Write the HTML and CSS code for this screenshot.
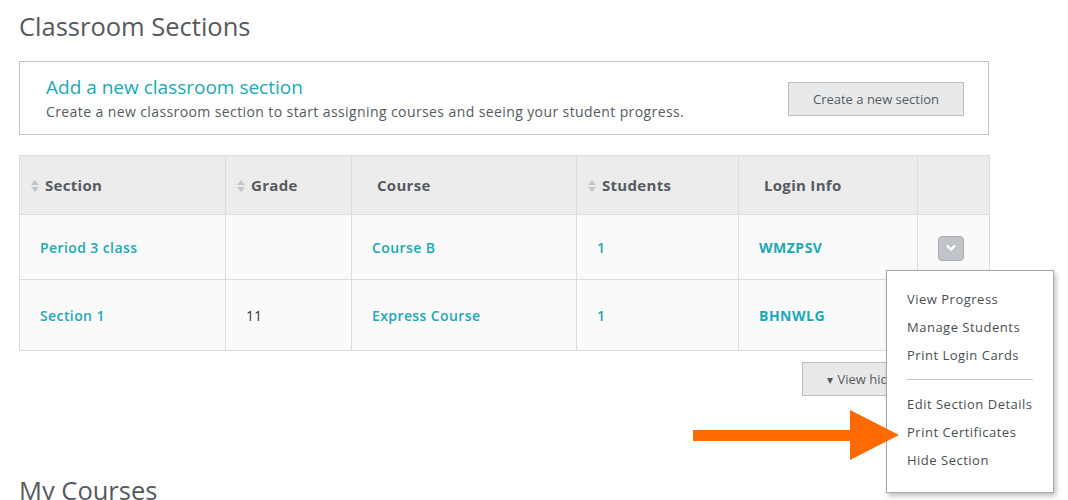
FILE: index.html
```html
<!DOCTYPE html>
<html>
<head>
  <title>Classroom Sections</title>
  <link rel="stylesheet" href="styles.css">
</head>
<body>
  <div class="page">
    <h1>Classroom Sections</h1>

    <div class="add-box">
      <div class="add-text">
        <h2>Add a new classroom section</h2>
        <p>Create a new classroom section to start assigning courses and seeing your student progress.</p>
      </div>
      <button class="btn create-btn">Create a new section</button>
    </div>

    <table class="sections">
      <thead>
        <tr>
          <th class="col-section sortable"><svg class="sort" width="8" height="12" viewBox="0 0 8 12"><path d="M4 0 L8 5 L0 5 Z M4 12 L8 7 L0 7 Z" fill="#c2c4c6"/></svg>Section</th>
          <th class="col-grade sortable"><svg class="sort" width="8" height="12" viewBox="0 0 8 12"><path d="M4 0 L8 5 L0 5 Z M4 12 L8 7 L0 7 Z" fill="#c2c4c6"/></svg>Grade</th>
          <th class="col-course">Course</th>
          <th class="col-students sortable"><svg class="sort" width="8" height="12" viewBox="0 0 8 12"><path d="M4 0 L8 5 L0 5 Z M4 12 L8 7 L0 7 Z" fill="#c2c4c6"/></svg>Students</th>
          <th class="col-login">Login Info</th>
          <th class="col-menu"></th>
        </tr>
      </thead>
      <tbody>
        <tr class="row-1">
          <td><a href="#">Period 3 class</a></td>
          <td></td>
          <td><a href="#">Course B</a></td>
          <td><a href="#">1</a></td>
          <td><a href="#" class="code">WMZPSV</a></td>
          <td class="menu-cell">
            <span class="menu-toggle"><svg width="12" height="8" viewBox="0 0 12 8"><path d="M2 1.5 L6 5.5 L10 1.5" fill="none" stroke="#fff" stroke-width="2.4"/></svg></span>
          </td>
        </tr>
        <tr class="row-2">
          <td><a href="#">Section 1</a></td>
          <td class="plain">11</td>
          <td><a href="#">Express Course</a></td>
          <td><a href="#">1</a></td>
          <td><a href="#" class="code">BHNWLG</a></td>
          <td class="menu-cell"></td>
        </tr>
      </tbody>
    </table>

    <div class="table-actions">
      <button class="btn hidden-btn"><span class="caret">&#9662;</span> View hidden sections</button>
    </div>

    <h1 class="next-heading">My Courses</h1>

    <ul class="dropdown">
      <li>View Progress</li>
      <li>Manage Students</li>
      <li>Print Login Cards</li>
      <li class="divider"></li>
      <li>Edit Section Details</li>
      <li>Print Certificates</li>
      <li>Hide Section</li>
    </ul>

    <div class="pointer">
      <span class="pointer-shaft"></span>
      <span class="pointer-head"></span>
    </div>
  </div>
</body>
</html>
```

FILE: styles.css
```css
body {
  margin: 0;
  font-family: "Open Sans", Arial, sans-serif;
  color: #555b61;
  background: #fff;
  overflow: hidden;
}
.page {
  position: relative;
  width: 970px;
  padding: 8px 19px 0;
}
h1 {
  margin: 0;
  font-size: 25.5px;
  font-weight: 400;
  line-height: 36px;
  color: #555a60;
}
.add-box {
  display: flex;
  align-items: center;
  justify-content: space-between;
  height: 72px;
  margin-top: 17px;
  padding: 0 24px 0 26px;
  border: 1px solid #c4c4c4;
}
.add-box h2 {
  margin: 0;
  font-size: 19px;
  font-weight: 400;
  line-height: 24px;
  color: #1ba9b6;
}
.add-box p {
  margin: 3px 0 0;
  font-size: 14px;
  line-height: 20px;
  letter-spacing: 0.4px;
  color: #555b61;
}
.btn {
  font-family: "Open Sans", Arial, sans-serif;
  font-size: 13px;
  color: #555b61;
  background: #e8e9eb;
  border: 1px solid #bdbdbd;
  border-radius: 0;
}
.create-btn {
  width: 176px;
  height: 34px;
  margin-top: 1px;
}
.sections {
  width: 970px;
  margin-top: 20px;
  border-collapse: collapse;
  table-layout: fixed;
  border: 1px solid #d6d6d6;
}
.sections th,
.sections td {
  box-sizing: border-box;
  border: 1px solid #dcdcdc;
  text-align: left;
}
.sections th {
  height: 59px;
  padding: 0 0 0 25px;
  background: #ececec;
  font-size: 15px;
  font-weight: 700;
  letter-spacing: 0.3px;
  color: #555b61;
}
.sections th.sortable {
  padding-left: 11px;
}
.sort {
  vertical-align: -1px;
  margin-right: 6px;
}
.col-section { width: 206px; }
.col-grade { width: 126px; }
.col-course { width: 225px; }
.col-students { width: 162px; }
.col-login { width: 179px; }
.col-menu { width: 72px; }
.sections td {
  padding: 0 0 0 20px;
  background: #fafafa;
  font-size: 14px;
}
.row-1 td { height: 65px; }
.row-2 td { height: 71px; }
.sections a {
  color: #1ba9b6;
  font-weight: 600;
  letter-spacing: 0.4px;
  text-decoration: none;
}
.sections a.code {
  font-weight: 700;
  letter-spacing: 0.5px;
}
.sections td.plain {
  color: #333;
}
.menu-toggle {
  display: inline-flex;
  align-items: center;
  justify-content: center;
  width: 24px;
  height: 23px;
  margin-top: 2px;
  background: #c0c4c8;
  border: 1px solid #a9adb1;
  border-radius: 4px;
}
.table-actions {
  display: flex;
  justify-content: flex-end;
  margin-top: 11px;
}
.hidden-btn {
  width: 187px;
  height: 34px;
  padding: 0 0 0 24px;
  text-align: left;
}
.caret {
  font-size: 12px;
  margin-right: 1px;
}
.next-heading {
  margin-top: 76px;
}
.dropdown {
  position: absolute;
  left: 886px;
  top: 270px;
  width: 166px;
  margin: 0;
  padding: 14px 0 18px;
  list-style: none;
  background: #fff;
  border: 1px solid #a9a9a9;
  box-shadow: 2px 3px 5px rgba(0, 0, 0, 0.25);
}
.dropdown li {
  padding: 0 0 0 20px;
  font-size: 13px;
  line-height: 28px;
  letter-spacing: 0.5px;
  color: #4a4e53;
}
.dropdown li.divider {
  height: 1px;
  margin: 10px 20px 10px 20px;
  padding: 0;
  background: #c9c9c9;
}
.pointer {
  position: absolute;
  left: 693px;
  top: 410px;
  display: flex;
  align-items: center;
}
.pointer-shaft {
  width: 157px;
  height: 11px;
  background: #ff6a00;
}
.pointer-head {
  width: 0;
  height: 0;
  border-top: 25px solid transparent;
  border-bottom: 25px solid transparent;
  border-left: 49px solid #ff6a00;
}
```
